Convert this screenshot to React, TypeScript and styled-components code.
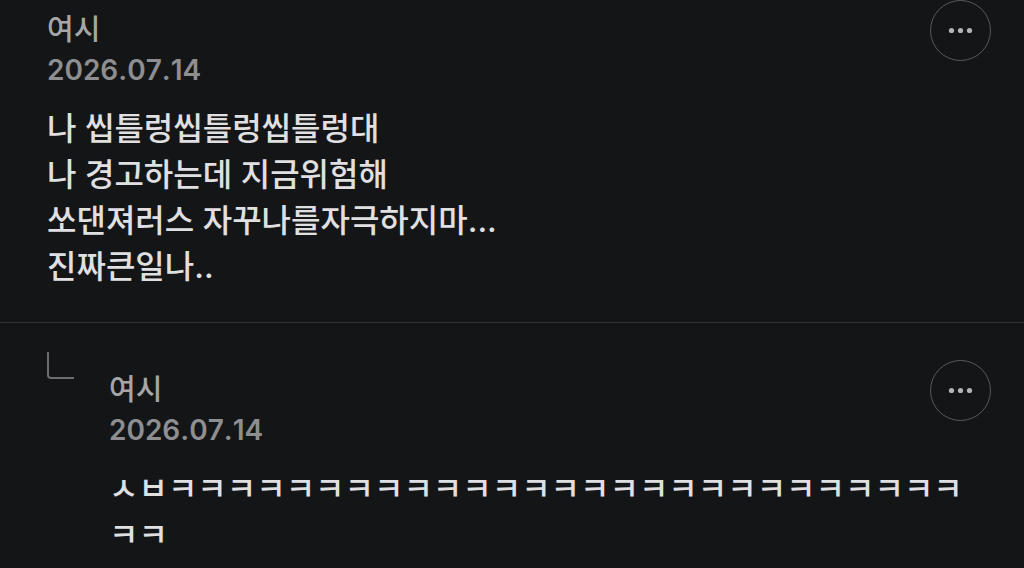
import React from "react";
import styled, { createGlobalStyle } from "styled-components";

const GlobalStyle = createGlobalStyle`
  * { box-sizing: border-box; }
  body {
    margin: 0;
    background: #141517;
    font-family: Inter, "Noto Sans CJK KR", sans-serif;
    color: #e0e0e2;
  }
`;

const Thread = styled.main`
  overflow: hidden;
`;

const Comment = styled.article<{ $reply?: boolean }>`
  display: flex;
  align-items: flex-start;
  padding: ${(p) => (p.$reply ? "29px 33px 4px 47px" : "0 33px 32px 47px")};
  border-top: ${(p) => (p.$reply ? "1px solid #303133" : "none")};
`;

const ReplyMark = styled.svg`
  flex: none;
  width: 28px;
  height: 28px;
  margin-right: 34px;
`;

const Content = styled.div`
  flex: 1;
  min-width: 0;
`;

const Header = styled.header<{ $reply?: boolean }>`
  display: flex;
  align-items: flex-start;
  justify-content: space-between;
  padding-top: ${(p) => (p.$reply ? "8px" : "0")};
`;

const Byline = styled.div`
  padding-top: 10px;
`;

const Author = styled.div`
  font-size: 29px;
  line-height: 40px;
  font-weight: 500;
  color: #a6a6a8;
`;

const PostedAt = styled.time`
  display: block;
  font-size: 28px;
  line-height: 40px;
  font-weight: 600;
  font-kerning: none;
  color: #8e8e91;
`;

const Message = styled.p`
  margin: 16px 0 0;
  font-size: 32px;
  line-height: 46px;
  font-weight: 500;
  font-kerning: none;
  white-space: pre-line;
  overflow-wrap: anywhere;
`;

const MoreButton = styled.button`
  flex: none;
  display: grid;
  place-items: center;
  width: 61px;
  height: 61px;
  padding: 0;
  border: 1px solid #58595b;
  border-radius: 50%;
  background: transparent;
  color: #b4b4b6;
`;

type EntryProps = { author: string; message: string; reply?: boolean };

const Entry = ({ author, message, reply }: EntryProps) => (
  <Comment $reply={reply}>
    {reply && (
      <ReplyMark viewBox="0 0 28 28" fill="none" stroke="#6c6d6f" strokeWidth="2" aria-hidden="true">
        <path d="M1 0V23Q1 26 4 26H27" />
      </ReplyMark>
    )}
    <Content>
      <Header $reply={reply}>
        <Byline>
          <Author>{author}</Author>
          <PostedAt dateTime="2026-07-14">2026.07.14</PostedAt>
        </Byline>
        <MoreButton type="button" aria-label="더보기">
          <svg width="25" height="7" viewBox="0 0 25 7" fill="currentColor" aria-hidden="true">
            <circle cx="3.5" cy="3.5" r="2.6" />
            <circle cx="12.5" cy="3.5" r="2.6" />
            <circle cx="21.5" cy="3.5" r="2.6" />
          </svg>
        </MoreButton>
      </Header>
      <Message>{message}</Message>
    </Content>
  </Comment>
);

export default function App() {
  return (
    <>
      <GlobalStyle />
      <Thread>
        <Entry
          author="여시"
          message={"나 씹틀렁씹틀렁씹틀렁대\n나 경고하는데 지금위험해\n쏘댄져러스 자꾸나를자극하지마...\n진짜큰일나.."}
        />
        <Entry reply author="여시" message={"ㅅㅂ" + "ㅋ".repeat(29)} />
      </Thread>
    </>
  );
}
